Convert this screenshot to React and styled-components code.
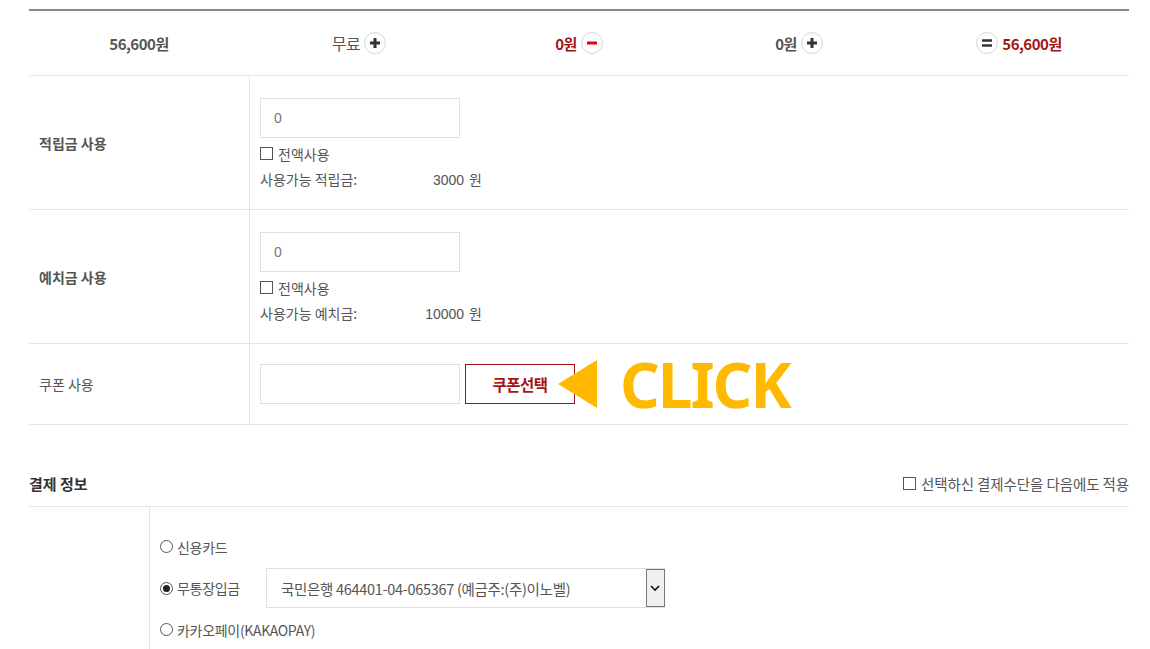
import React from 'react';
import styled, { createGlobalStyle } from 'styled-components';

const GlobalStyle = createGlobalStyle`
	body {margin:0; background:#fff; font-family:"Noto Sans CJK KR", "Noto Sans", sans-serif; color:#555;}
	* {box-sizing:border-box;}
`;

const Page = styled.div`
	width:1100px;
	margin-left:29px;
	padding-top:9px;
	font-size:14px;
`;

const Summary = styled.div`
	display:grid;
	grid-template-columns:repeat(5, 1fr);
	height:67px;
	border-top:2px solid #888;
	border-bottom:1px solid #e5e5e5;
`;

const SumCell = styled.div`
	display:flex;
	align-items:center;
	justify-content:center;
	gap:4px;
	font-size:${p => p.light ? '16px' : '15px'};
	font-weight:${p => p.light ? 400 : 700};
	letter-spacing:-0.5px;
	color:${p => p.red ? '#a31515' : '#555'};
`;

const Circle = styled.span`
	display:inline-flex;
	align-items:center;
	justify-content:center;
	width:22px;
	height:22px;
	border:1px solid #d8d8d8;
	border-radius:50%;
	background:#fff;
`;

const Sign = ({ type }) => (
	<Circle>
		<svg width="12" height="12" viewBox="0 0 12 12">
			{type === 'plus' && <path d="M1 6h10M6 1v10" stroke="#333" strokeWidth="3" />}
			{type === 'minus' && <path d="M1 6h10" stroke="#e60012" strokeWidth="3" />}
			{type === 'equal' && <path d="M1 3.5h10M1 8.5h10" stroke="#333" strokeWidth="2.6" />}
		</svg>
	</Circle>
);

const Row = styled.div`
	display:grid;
	grid-template-columns:${p => p.narrow ? '121px' : '221px'} 1fr;
	border-bottom:${p => p.noBorder ? 'none' : '1px solid #e5e5e5'};
`;

const Label = styled.div`
	display:flex;
	align-items:center;
	padding-left:10px;
	border-right:1px solid #e5e5e5;
	font-size:14px;
	font-weight:${p => p.bold ? 700 : 400};
	color:#555;
`;

const Cell = styled.div`
	padding:${p => p.pad || '22px 10px 18px'};
	display:flex;
	flex-direction:column;
`;

const Input = styled.div`
	width:200px;
	height:40px;
	border:1px solid #e0e0e0;
	padding:0 13px;
	display:flex;
	align-items:center;
	color:#777;
	font-family:"Liberation Sans", sans-serif;
	font-size:14px;
`;

const Check = styled.span`
	display:inline-block;
	width:13px;
	height:13px;
	border:1px solid #555;
	margin-right:5px;
`;

const Line = styled.div`
	display:flex;
	align-items:center;
	height:25px;
	color:#555;
	margin-top:${p => p.first ? '3px' : '0'};
`;

const Avail = styled.div`
	display:flex;
	justify-content:space-between;
	align-items:center;
	width:222px;
	height:25px;
	color:#555;
	span:last-child {font-family:"Liberation Sans", sans-serif; font-size:14px;}
	span:last-child b {font-family:"Noto Sans CJK KR", sans-serif; font-weight:400; margin-left:5px;}
`;

const Inline = styled.div`
	display:flex;
	align-items:center;
	gap:5px;
	height:40px;
`;

const CouponBtn = styled.button`
	width:110px;
	height:40px;
	border:1px solid #a31515;
	background:#fff;
	color:#a31515;
	font-family:"Noto Sans CJK KR", sans-serif;
	font-size:15.5px;
	font-weight:700;
	letter-spacing:-0.5px;
	padding:0;
`;

const ClickMark = styled.div`
	display:flex;
	align-items:center;
	height:40px;
	margin-left:-22px;
	gap:23px;
	color:#ffb900;
	font-family:"Noto Sans", sans-serif;
	font-weight:700;
	font-size:62px;
	line-height:40px;
	letter-spacing:-2px;
	svg {flex:none;}
`;

const PayHead = styled.div`
	margin-top:40px;
	height:42px;
	padding-bottom:4px;
	display:flex;
	align-items:center;
	justify-content:space-between;
	border-bottom:1px solid #e5e5e5;
`;

const Title = styled.h3`
	margin:0;
	font-size:15px;
	font-weight:700;
	color:#333;
`;

const Remember = styled.div`
	display:flex;
	align-items:center;
	color:#555;
	font-size:14.5px;
	letter-spacing:-0.1px;
`;

const Methods = styled.div`
	padding:19px 10px 0;
	display:flex;
	flex-direction:column;
`;

const Method = styled.label`
	display:flex;
	align-items:center;
	height:${p => p.tall ? '42px' : '41px'};
	color:#555;
	font-size:14px;
	letter-spacing:-0.3px;
`;

const Radio = styled.span`
	display:inline-flex;
	align-items:center;
	justify-content:center;
	width:13px;
	height:13px;
	border:1px solid #555;
	border-radius:50%;
	margin-right:4px;
	&::after {
		content:"";
		display:${p => p.on ? 'block' : 'none'};
		width:7px;
		height:7px;
		border-radius:50%;
		background:#222;
	}
`;

const Select = styled.div`
	margin-left:26px;
	width:399px;
	height:40px;
	border:1px solid #e0e0e0;
	display:flex;
	align-items:center;
	justify-content:space-between;
	padding-left:14px;
	color:#555;
	font-size:14.5px;
`;

const Caret = styled.span`
	width:19px;
	height:38px;
	margin-right:-1px;
	border:1px solid #777;
	background:#f0f0f0;
	display:flex;
	align-items:center;
	justify-content:center;
`;

const rows = [
	{ label: '적립금 사용', avail: '사용가능 적립금:', amount: '3000' },
	{ label: '예치금 사용', avail: '사용가능 예치금:', amount: '10000' },
];

export default function App() {
	return (
		<Page>
			<GlobalStyle />
			<Summary>
				<SumCell>56,600원</SumCell>
				<SumCell light>무료 <Sign type="plus" /></SumCell>
				<SumCell red>0원 <Sign type="minus" /></SumCell>
				<SumCell>0원 <Sign type="plus" /></SumCell>
				<SumCell red><Sign type="equal" /> 56,600원</SumCell>
			</Summary>

			{rows.map(r => (
				<Row key={r.label}>
					<Label bold>{r.label}</Label>
					<Cell>
						<Input>0</Input>
						<Line first><Check />전액사용</Line>
						<Avail>
							<span>{r.avail}</span>
							<span>{r.amount}<b>원</b></span>
						</Avail>
					</Cell>
				</Row>
			))}

			<Row>
				<Label>쿠폰 사용</Label>
				<Cell pad="20px 10px 20px">
					<Inline>
						<Input />
						<CouponBtn>쿠폰선택</CouponBtn>
						<ClickMark>
							<svg width="39" height="48" viewBox="0 0 39 48">
								<path d="M0 24L39 0V48Z" fill="#ffb900" />
							</svg>
							CLICK
						</ClickMark>
					</Inline>
				</Cell>
			</Row>

			<PayHead>
				<Title>결제 정보</Title>
				<Remember><Check />선택하신 결제수단을 다음에도 적용</Remember>
			</PayHead>

			<Row narrow noBorder>
				<Label />
				<Methods>
					<Method><Radio />신용카드</Method>
					<Method tall>
						<Radio on />무통장입금
						<Select>
							국민은행 464401-04-065367 (예금주:(주)이노벨)
							<Caret>
								<svg width="10" height="8" viewBox="0 0 10 8">
									<path d="M1 2l4 4 4-4" stroke="#111" strokeWidth="1.6" fill="none" />
								</svg>
							</Caret>
						</Select>
					</Method>
					<Method><Radio />카카오페이(KAKAOPAY)</Method>
				</Methods>
			</Row>
		</Page>
	);
}
